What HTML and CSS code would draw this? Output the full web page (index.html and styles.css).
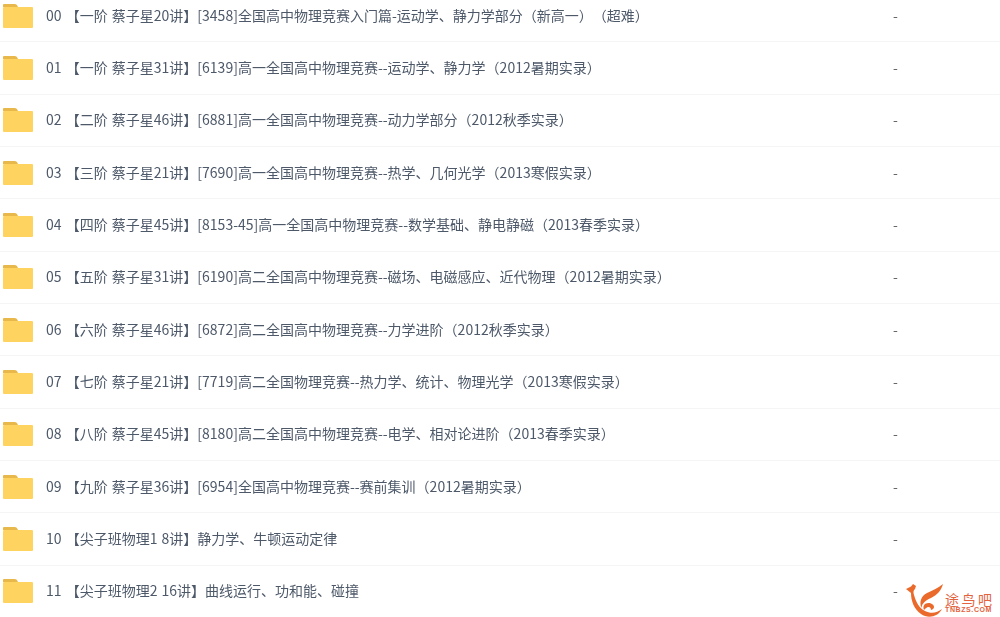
FILE: index.html
```html
<!DOCTYPE html>
<html lang="zh-CN">
<head>
    <meta charset="UTF-8">
    <title>文件列表</title>
    <link rel="stylesheet" href="styles.css">
</head>
<body>

<svg class="defs" width="0" height="0">
    <symbol id="folder" viewBox="0 0 30 24">
        <path d="M1 0h11q2 0 3 3h-15v-2q0-1 1-1z" fill="#e8b84a"/>
        <path d="M1 3h28q1 0 1 1v19q0 1-1 1h-28q-1 0-1-1v-19q0-1 1-1z" fill="#ffd35f"/>
    </symbol>
</svg>

<ul class="file-list">
    <li class="file-row"><svg class="folder"><use href="#folder"/></svg><span class="name">00 【一阶 蔡子星20讲】[3458]全国高中物理竞赛入门篇-运动学、静力学部分（新高一）（超难）</span><span class="size">-</span></li>
    <li class="file-row"><svg class="folder"><use href="#folder"/></svg><span class="name">01 【一阶 蔡子星31讲】[6139]高一全国高中物理竞赛--运动学、静力学（2012暑期实录）</span><span class="size">-</span></li>
    <li class="file-row"><svg class="folder"><use href="#folder"/></svg><span class="name">02 【二阶 蔡子星46讲】[6881]高一全国高中物理竞赛--动力学部分（2012秋季实录）</span><span class="size">-</span></li>
    <li class="file-row"><svg class="folder"><use href="#folder"/></svg><span class="name">03 【三阶 蔡子星21讲】[7690]高一全国高中物理竞赛--热学、几何光学（2013寒假实录）</span><span class="size">-</span></li>
    <li class="file-row"><svg class="folder"><use href="#folder"/></svg><span class="name">04 【四阶 蔡子星45讲】[8153-45]高一全国高中物理竞赛--数学基础、静电静磁（2013春季实录）</span><span class="size">-</span></li>
    <li class="file-row"><svg class="folder"><use href="#folder"/></svg><span class="name">05 【五阶 蔡子星31讲】[6190]高二全国高中物理竞赛--磁场、电磁感应、近代物理（2012暑期实录）</span><span class="size">-</span></li>
    <li class="file-row"><svg class="folder"><use href="#folder"/></svg><span class="name">06 【六阶 蔡子星46讲】[6872]高二全国高中物理竞赛--力学进阶（2012秋季实录）</span><span class="size">-</span></li>
    <li class="file-row"><svg class="folder"><use href="#folder"/></svg><span class="name">07 【七阶 蔡子星21讲】[7719]高二全国物理竞赛--热力学、统计、物理光学（2013寒假实录）</span><span class="size">-</span></li>
    <li class="file-row"><svg class="folder"><use href="#folder"/></svg><span class="name">08 【八阶 蔡子星45讲】[8180]高二全国高中物理竞赛--电学、相对论进阶（2013春季实录）</span><span class="size">-</span></li>
    <li class="file-row"><svg class="folder"><use href="#folder"/></svg><span class="name">09 【九阶 蔡子星36讲】[6954]全国高中物理竞赛--赛前集训（2012暑期实录）</span><span class="size">-</span></li>
    <li class="file-row"><svg class="folder"><use href="#folder"/></svg><span class="name">10 【尖子班物理1 8讲】静力学、牛顿运动定律</span><span class="size">-</span></li>
    <li class="file-row"><svg class="folder"><use href="#folder"/></svg><span class="name">11 【尖子班物理2 16讲】曲线运行、功和能、碰撞</span><span class="size">-</span></li>
</ul>

<div class="watermark">
    <svg class="mark" viewBox="0 0 40 36">
        <path d="M38 1C36 8 32 12 26 15C21 17 17 20 16.500 25C14 19 16 13 22 10C28 7 33 5 38 1z" fill="#ea6a2c"/>
        <path d="M1 6L6 3.500L8 1L11 3L10 6C8.500 7 8 9 9 12C11 19 14 25 20 28C26 31 32 30 37 26C33 34 23 36 16 31C9 26 6 18 6 10z" fill="#ea6a2c"/>
        <path d="M19 27C17 22 21 19 26 20.500C30 22 30 26 26 27C26 24.500 24 23.500 22 24.500C21 25 20 26 19 27z" fill="#ea6a2c"/>
    </svg>
    <div class="brand">
        <span class="brand-cn">途鸟吧</span>
        <span class="brand-en">TNBZS.COM</span>
    </div>
</div>

</body>
</html>
```

FILE: styles.css
```css
html, body {
    margin: 0;
    height: 617px;
    overflow: hidden;
    background: #fff;
}
body {
    font-family: "Noto Sans CJK SC", "Liberation Sans", sans-serif;
    font-size: 14px;
    color: #4d5969;
}
.defs {
    display: block;
}
.file-list {
    list-style: none;
    margin: -10px 0 0 0;
    padding: 0;
    filter: blur(0.35px);
}
.file-row {
    display: flex;
    align-items: center;
    box-sizing: border-box;
    height: 52.33px;
    padding-left: 3px;
    border-bottom: 1px solid #f4f5f6;
}
.folder {
    width: 30px;
    height: 24px;
    flex: none;
    margin-right: 13px;
}
.name {
    width: 847px;
    flex: none;
    margin-bottom: 2px;
    white-space: pre;
    word-spacing: 1px;
    text-spacing-trim: space-all;
}
.size {
    color: #666;
    margin-bottom: 2px;
}
.watermark {
    position: absolute;
    left: 905px;
    top: 583px;
    display: flex;
    align-items: flex-start;
}
.mark {
    width: 40px;
    height: 36px;
}
.brand {
    display: flex;
    flex-direction: column;
    margin-top: 9px;
    color: #e4633f;
}
.brand-cn {
    font-size: 14px;
    line-height: 14px;
    letter-spacing: 2.500px;
}
.brand-en {
    font-family: "Liberation Sans", sans-serif;
    font-size: 7px;
    font-weight: bold;
    line-height: 8px;
    letter-spacing: 0.6px;
}
```
